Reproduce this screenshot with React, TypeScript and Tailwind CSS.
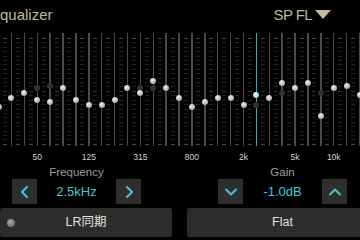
import React from 'react';

const bands = [
  '20', '25', '31.5', '40', '50', '63', '80', '100', '125', '160', '200', '250', '315', '400', '500', '630',
  '800', '1k', '1.25k', '1.6k', '2k', '2.5k', '3.15k', '4k', '5k', '6.3k', '8k', '10k', '12.5k', '16k', '20k',
];

// knob centres, absolute y on the page
const levels = [
  100, 107.3, 98, 93, 100, 102.3, 88.3, 100, 104.7, 104.7, 100, 88.3, 93, 81, 88.3, 97.7,
  107, 102.3, 97.7, 97.7, 104.7, 95.3, 97.7, 83.3, 88.3, 83.3, 116.3, 88.3, 86, 95.3, 95,
];

const ghosts: Record<number, number> = { 4: 88.3, 5: 86, 12: 88.3, 13: 88.3, 21: 104.7, 23: 93, 26: 93 };

const labelled = ['50', '125', '315', '800', '2k', '5k', '10k'];
const selected = 21;
const TOP = 33;

const Chevron = ({ dir }: { dir: 'left' | 'right' | 'up' | 'down' }) => {
  const pts = {
    left: '8,1 3,6 8,11',
    right: '4,1 9,6 4,11',
    up: '1,8.5 6,3.5 11,8.5',
    down: '1,3.5 6,8.5 11,3.5',
  }[dir];
  return (
    <svg width="12" height="12" viewBox="0 0 12 12">
      <polyline points={pts} fill="none" stroke="#45c6d3" strokeWidth="2" strokeLinecap="round" strokeLinejoin="round" />
    </svg>
  );
};

const Stepper = ({ label, value, prev, next }: { label: string; value: string; prev: 'left' | 'down'; next: 'right' | 'up' }) => (
  <div className="flex flex-col items-center w-[129px]">
    <div className="text-[11.5px] leading-[14px] text-[#9b9b9b]">{label}</div>
    <div className="flex items-center justify-between w-full">
      <button className="w-[25px] h-[25px] bg-[#2e2e2e] flex items-center justify-center">
        <Chevron dir={prev} />
      </button>
      <span className="text-[13px] leading-[16px] text-[#45c6d3]">{value}</span>
      <button className="w-[25px] h-[25px] bg-[#2e2e2e] flex items-center justify-center">
        <Chevron dir={next} />
      </button>
    </div>
  </div>
);

export default function App() {
  return (
    <div className="w-[360px] h-[240px] bg-black overflow-hidden font-['Liberation_Sans','Noto_Sans_CJK_JP',sans-serif]">
      <div className="h-[33px] flex items-start justify-between pt-[6px] pr-[29px]">
        <span className="ml-[-10px] text-[15px] leading-[18px] text-[#c3b99e]">Equalizer</span>
        <div className="flex items-center gap-[3px] text-[15px] leading-[18px] text-[#c3b99e]">
          <span className="tracking-[-0.6px]">SP FL</span>
          <svg width="16" height="10" viewBox="0 0 16 10">
            <polygon points="0,0 16,0 8,9" fill="#c3b99e" />
          </svg>
        </div>
      </div>

      <div className="overflow-hidden">
        <div className="flex ml-[-20.75px]">
          {bands.map((b, i) => {
            const active = i === selected;
            return (
              <div key={b} className="w-[12.9px] shrink-0 flex flex-col">
                <div className="relative h-[113px]">
                  <div className="absolute left-[-2px] w-[4px] top-[5px] h-[107px] flex flex-col justify-between">
                    {Array.from({ length: 25 }).map((_, r) => (
                      <div
                        key={r}
                        className={`h-[1px] ${r === 0 || r === 24 ? 'bg-[#464646]' : r === 12 ? 'bg-[#343434]' : 'bg-[#222222]'}`}
                      />
                    ))}
                  </div>
                  <div
                    className={`absolute top-0 bottom-0 left-[5.7px] w-[1.5px] ${active ? 'bg-[#3aa9b1]' : 'bg-[#4a4a4a]'}`}
                  />
                  {ghosts[i] !== undefined && (
                    <div
                      className="absolute left-[3.45px] w-[6px] h-[6px] rounded-full bg-[#323232]"
                      style={{ top: ghosts[i] - TOP - 3 }}
                    />
                  )}
                  <div
                    className={`absolute left-[3.45px] w-[6px] h-[6px] rounded-full ${
                      active
                        ? 'bg-[radial-gradient(circle_at_40%_35%,#e0ffff,#5ccdd6)]'
                        : 'bg-[radial-gradient(circle_at_40%_35%,#f0f0f0,#8c8c8c)]'
                    }`}
                    style={{ top: levels[i] - TOP - 3 }}
                  />
                </div>
                <div className="h-[16px] pt-[6px] flex justify-center">
                  {labelled.includes(b) && (
                    <span className="text-[8.5px] leading-[10px] text-[#d2d2d2] whitespace-nowrap">{b}</span>
                  )}
                </div>
              </div>
            );
          })}
        </div>
      </div>

      <div className="flex mt-[3px] pl-[12px] gap-[77px]">
        <Stepper label="Frequency" value="2.5kHz" prev="left" next="right" />
        <Stepper label="Gain" value="-1.0dB" prev="down" next="up" />
      </div>

      <div className="flex gap-[15px] mt-[4px]">
        <button className="w-[172px] h-[29px] shrink-0 bg-[#2c2c2c] rounded-[2px] flex items-center pl-[7px] pr-[15px]">
          <span className="w-[8px] h-[8px] rounded-full bg-[radial-gradient(circle_at_40%_35%,#a8a8a8,#5a5a5a)]" />
          <span className="flex-1 text-center text-[12.5px] text-[#e2e2e2]">LR同期</span>
        </button>
        <button className="w-[191px] h-[29px] shrink-0 bg-[#2c2c2c] rounded-[2px] flex items-center justify-center text-[12.5px] text-[#e2e2e2]">
          Flat
        </button>
      </div>
    </div>
  );
}
